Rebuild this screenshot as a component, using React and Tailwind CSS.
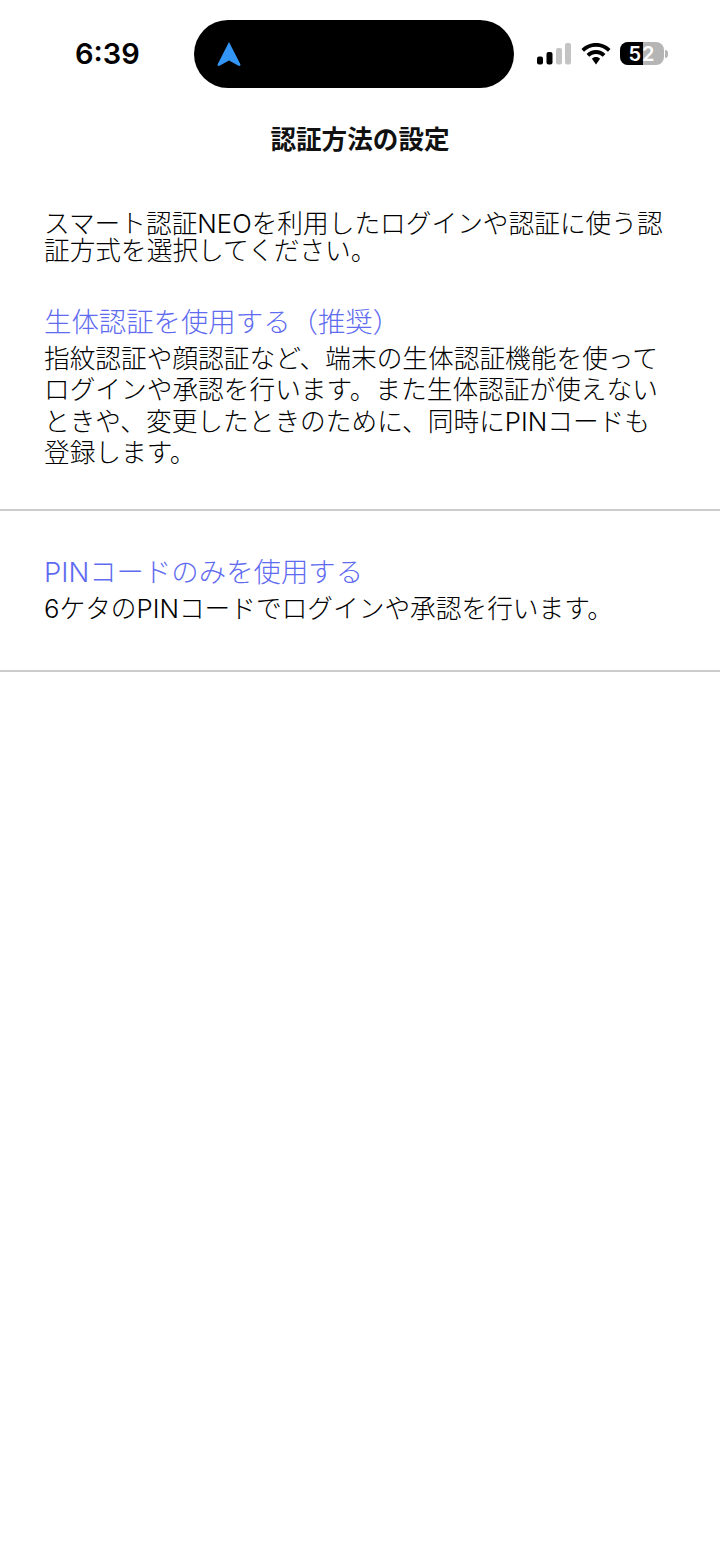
import React from 'react';

const jp = { fontFamily: 'Inter, "Noto Sans CJK JP", sans-serif' };

const StatusBar = () => (
  <div className="flex items-center h-[108px] pb-[1px]">
    <div className="w-[194px] pl-[75px] text-[29px] leading-none font-semibold text-black" style={{ fontFamily: 'Inter, sans-serif' }}>6:39</div>
    <div className="w-[320px] h-[68px] bg-black rounded-full flex items-center pl-[23px]">
      <svg width="24" height="26" viewBox="0 0 24 26">
        <path d="M12 1 L23.5 23.5 Q23.6 25.4 21.5 24.8 L12 19.5 L2.5 24.8 Q0.4 25.4 0.5 23.5 Z" fill="#3395f5" />
      </svg>
    </div>
    <div className="flex items-center ml-[23px]">
      <svg width="34" height="22" viewBox="0 0 34 22">
        <rect x="0" y="13.5" width="6" height="8" rx="2" fill="#000" />
        <rect x="9.5" y="9" width="6" height="12.5" rx="2" fill="#000" />
        <rect x="19" y="5" width="6" height="16.5" rx="2" fill="#c4c4c4" />
        <rect x="28" y="0" width="6" height="21.5" rx="2" fill="#c4c4c4" />
      </svg>
      <svg className="ml-[10px]" width="30" height="22" viewBox="0 0 30 22">
        <path d="M15 0 C9 0 4 2.4 0.5 6 L3 8.8 C6 5.7 10.3 3.8 15 3.8 C19.7 3.8 24 5.7 27 8.8 L29.5 6 C26 2.4 21 0 15 0 Z" fill="#000" />
        <path d="M15 7 C11.4 7 8 8.5 5.6 11 L8.2 13.8 C10 12 12.4 10.9 15 10.9 C17.6 10.9 20 12 21.8 13.8 L24.4 11 C22 8.5 18.6 7 15 7 Z" fill="#000" />
        <path d="M15 14 C13.4 14 12 14.6 10.9 15.7 L15 21.5 L19.1 15.7 C18 14.6 16.6 14 15 14 Z" fill="#000" />
      </svg>
      <div className="relative ml-[9px] w-[44px] h-[23px] rounded-[8px] bg-[#b5b5b5] overflow-hidden flex items-center justify-center">
        <div className="absolute left-0 top-0 bottom-0 w-[23px] bg-black" />
        <span className="relative text-[20px] leading-none font-semibold text-white tracking-[1px]" style={{ fontFamily: 'Inter, sans-serif' }}>52</span>
      </div>
      <div className="ml-[1px] w-[3px] h-[8px] rounded-r-full bg-[#b5b5b5]" />
    </div>
  </div>
);

const Option = ({ title, className, children }) => (
  <div className={`border-b-2 border-[#cccccc] px-[44px] ${className}`}>
    <div className="text-[27.4px] leading-[36px] font-light text-[#5f6bf0]" style={jp}>{title}</div>
    <div className="mt-[3px] text-[25.7px] leading-[31.4px] font-light text-black whitespace-nowrap" style={jp}>{children}</div>
  </div>
);

export default function App() {
  return (
    <div className="w-[720px] h-[1561px] bg-white overflow-hidden">
      <StatusBar />
      <h1 className="text-center text-[25.6px] leading-[36px] font-bold text-[#111111] mt-[14px]" style={jp}>認証方法の設定</h1>
      <p className="mt-[52px] px-[44px] text-[25.7px] leading-[27px] font-light text-black whitespace-nowrap" style={jp}>
        スマート認証NEOを利用したログインや認証に使う認<br />証方式を選択してください。
      </p>
      <div className="mt-[40px]">
        <Option title="生体認証を使用する（推奨）" className="pb-[40px]">
          指紋認証や顔認証など、端末の生体認証機能を使って<br />
          ログインや承認を行います。また生体認証が使えない<br />
          ときや、変更したときのために、同時にPINコードも<br />
          登録します。
        </Option>
        <Option title="PINコードのみを使用する" className="pt-[43px] pb-[46px]">
          6ケタのPINコードでログインや承認を行います。
        </Option>
      </div>
    </div>
  );
}
